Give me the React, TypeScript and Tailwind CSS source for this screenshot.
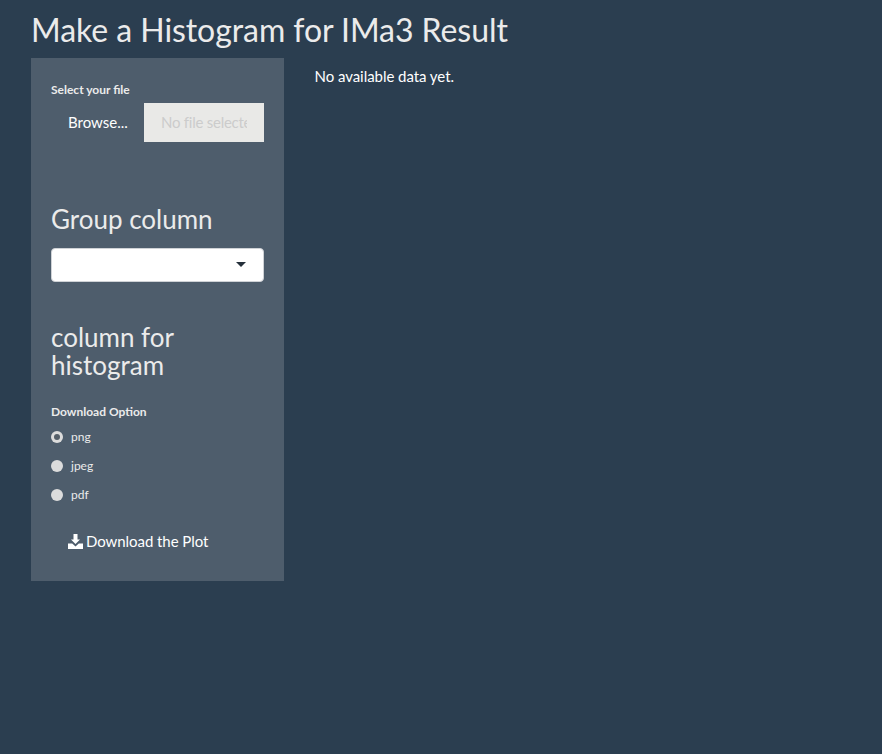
export default function App() {
  const options = ["png", "jpeg", "pdf"];

  return (
    <div className="min-h-[754px] bg-[#2b3e50] px-[31px] font-['Lato','Open_Sans',sans-serif] text-[15px] text-[#ebebeb]">
      <h2 className="pt-[11px] pb-[9px] text-[32px] leading-[38px] font-normal tracking-[-0.06px]">Make a Histogram for IMa3 Result</h2>

      <div className="flex">
        <div className="h-[523px] w-[253px] shrink-0 bg-[#4e5d6c] px-[20px] pt-[24px]">
          {/* File input */}
          <label className="block text-[12px] leading-[16px] font-bold">Select your file</label>
          <div className="mt-[5px] flex h-[39px]">
            <div className="flex w-[93px] items-center pl-[17px] text-white">Browse...</div>
            <div className="flex w-[120px] items-center bg-[#e9e9e7] px-[17px]">
              <span className="overflow-hidden whitespace-nowrap tracking-[-0.25px] text-[#cccccc]">No file selected</span>
            </div>
          </div>

          {/* Group column */}
          <h3 className="mt-[63px] text-[26px] leading-[29px] font-normal">Group column</h3>
          <div className="relative mt-[14px] h-[34px] rounded-[4px] border border-[#cfd2d6] bg-white">
            <span className="absolute top-[13px] right-[17px] h-0 w-0 border-x-[5px] border-t-[5px] border-x-transparent border-t-[#25303b]" />
          </div>

          <h3 className="mt-[41px] text-[26px] leading-[28px] font-normal">column for histogram</h3>

          {/* Download option */}
          <label className="mt-[25px] block text-[12px] leading-[16px] font-bold">Download Option</label>
          <div className="mt-[8px] flex flex-col gap-[12px]">
            {options.map((opt, i) => (
              <div key={opt} className="flex h-[17px] items-center text-[12px]">
                <span className="flex h-[12px] w-[12px] items-center justify-center rounded-full bg-[#dcdcdc]">
                  {i === 0 && <span className="h-[6px] w-[6px] rounded-full bg-[#555f69]" />}
                </span>
                <span className="ml-[8px]">{opt}</span>
              </div>
            ))}
          </div>

          <div className="mt-[28px] flex h-[20px] items-center pl-[17px] text-white">
            <svg width="15" height="15" viewBox="0 0 15 15" className="mr-[3px] shrink-0" fill="white">
              <path d="M5.5 0h4v5.5H12L7.5 10 3 5.5h2.5z" />
              <path d="M0 9.5h4.2L7.5 12.6l3.3-3.1H15V15H0z" />
            </svg>
            <span className="tracking-[-0.06px]">Download the Plot</span>
          </div>
        </div>

        <div className="pt-[8px] pl-[30.5px] text-white">
          <p className="leading-[20px] tracking-[-0.05px]">No available data yet.</p>
        </div>
      </div>
    </div>
  );
}
